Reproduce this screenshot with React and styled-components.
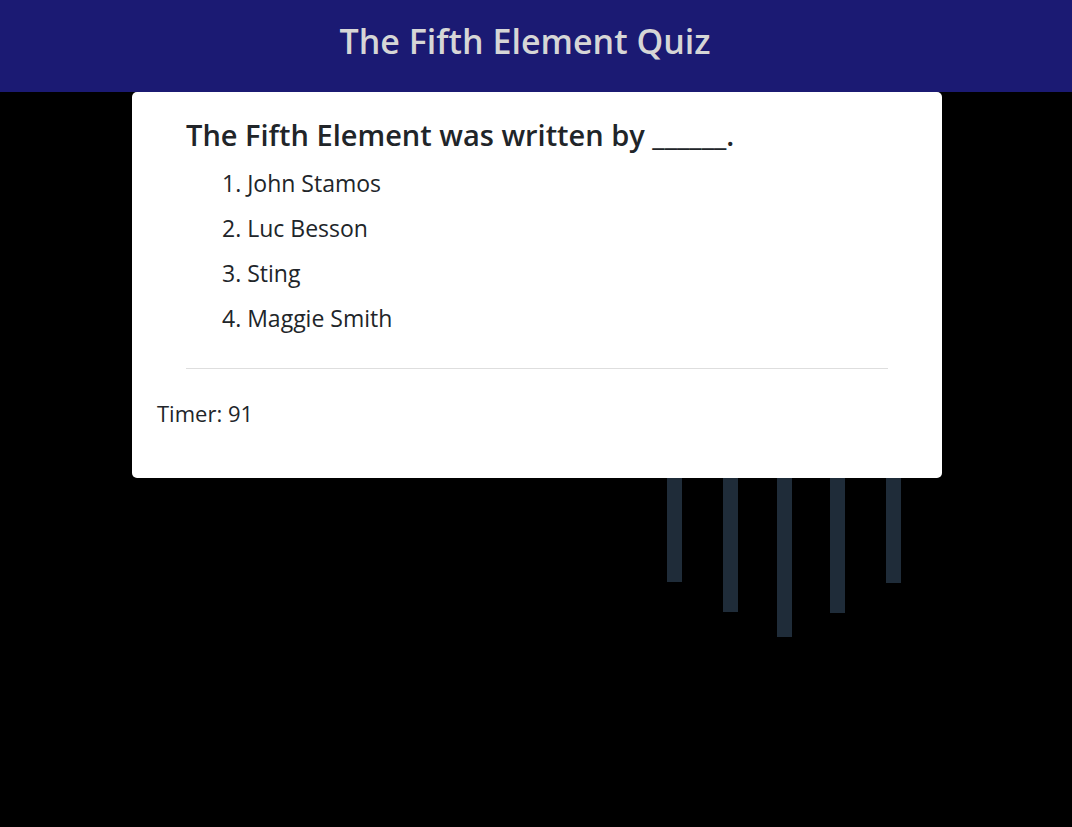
import React from 'react'
import styled, { createGlobalStyle } from 'styled-components'

const GlobalStyle = createGlobalStyle`
  html, body {
    margin: 0;
    padding: 0;
    background: #000;
    font-family: 'Open Sans', 'Noto Sans', sans-serif;
    color: #212529;
  }
`

const answers = ['John Stamos', 'Luc Besson', 'Sting', 'Maggie Smith']

// decorative bars hanging behind the card
const bars = [
  { left: 667, bottom: 582 },
  { left: 723, bottom: 612 },
  { left: 777, bottom: 637 },
  { left: 830, bottom: 613 },
  { left: 886, bottom: 583 },
]

const App = () => {
  return (
    <Page>
      <GlobalStyle />
      <Header>
        <Title>The Fifth Element Quiz</Title>
      </Header>
      <Stage>
        {bars.map((b) => (
          <Bar key={b.left} style={{ left: b.left, height: b.bottom - 92 }} />
        ))}
        <Card>
          <Question>
            <h3>The Fifth Element was written by ______.</h3>
            <Answers>
              {answers.map((a) => (
                <li key={a}>{a}</li>
              ))}
            </Answers>
            <Divider />
          </Question>
          <Timer>Timer: 91</Timer>
        </Card>
      </Stage>
    </Page>
  )
}

export default App

const Page = styled.div`
  width: 100%;
  min-height: 827px;
  background: #000;
`

const Header = styled.header`
  height: 92px;
  background: #1b1a73;
  display: flex;
  align-items: center;
  justify-content: center;
  padding-right: 22px;
  box-sizing: border-box;
`

const Title = styled.h1`
  margin: 0 0 10px 0;
  font-size: 34px;
  font-weight: 600;
  color: #d6d6d6;
`

const Stage = styled.main`
  position: relative;
`

const Bar = styled.div`
  position: absolute;
  top: 0;
  width: 15px;
  background: #1f2c39;
`

const Card = styled.section`
  position: relative;
  z-index: 1;
  margin-left: 132px;
  width: 810px;
  height: 386px;
  background: #fff;
  border-radius: 5px;
  box-sizing: border-box;
  padding: 23px 0 0 0;
`

const Question = styled.div`
  padding: 0 54px;

  h3 {
    margin: 0 0 7px 0;
    font-size: 29px;
    font-weight: 600;
  }
`

const Answers = styled.ol`
  margin: 0;
  padding-left: 36px;
  list-style-position: inside;
  font-size: 23px;

  li {
    line-height: 45px;
  }
`

const Divider = styled.hr`
  margin: 27px 0 0 0;
  border: none;
  border-top: 1px solid #dedede;
`

const Timer = styled.div`
  padding: 29px 25px 0;
  font-size: 22px;
`
